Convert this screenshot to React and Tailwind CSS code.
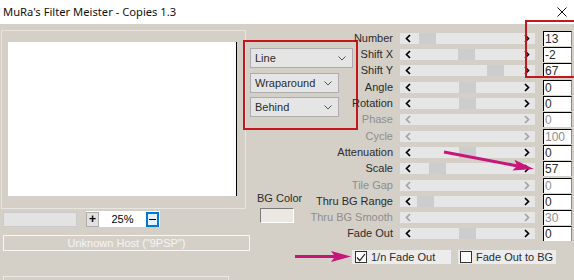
import React from 'react';

const rows = [
  { label: 'Number', value: '13', thumb: 19, h: 'h-[16px]' },
  { label: 'Shift X', value: '-2', thumb: 58, h: 'h-[16px]' },
  { label: 'Shift Y', value: '67', thumb: 87, h: 'h-[17px]' },
  { label: 'Angle', value: '0', thumb: 59, h: 'h-[16px]' },
  { label: 'Rotation', value: '0', thumb: 59, h: 'h-[16px]' },
  { label: 'Phase', value: '0', disabled: true, h: 'h-[17px]' },
  { label: 'Cycle', value: '100', disabled: true, h: 'h-[16px]' },
  { label: 'Attenuation', value: '0', thumb: 59, h: 'h-[16px]' },
  { label: 'Scale', value: '57', thumb: 29, h: 'h-[17px]' },
  { label: 'Tile Gap', value: '0', disabled: true, h: 'h-[16px]' },
  { label: 'Thru BG Range', value: '0', thumb: 17, h: 'h-[16px]' },
  { label: 'Thru BG Smooth', value: '30', disabled: true, h: 'h-[16px]' },
  { label: 'Fade Out', value: '0', thumb: 59, h: 'h-[16px]' },
];

function Arrow({ dir, disabled }) {
  const pts = dir === 'left' ? '5,1 1.5,4.5 5,8' : '1,1 4.5,4.5 1,8';
  return (
    <svg width="6" height="9" viewBox="0 0 6 9" className="shrink-0">
      <polyline points={pts} fill="none" stroke={disabled ? '#a3a3a3' : '#000'} strokeWidth="1.7" />
    </svg>
  );
}

function Dropdown({ text, w }) {
  return (
    <div className={`${w} h-[20px] flex items-center justify-between pl-[4px] pr-[6px] bg-[#e5e5e5] border border-[#adadad] text-[11px] leading-[14px]`}>
      <span>{text}</span>
      <svg width="8" height="5" viewBox="0 0 8 5"><polyline points="0.5,0.5 4,4 7.5,0.5" fill="none" stroke="#555" strokeWidth="1" /></svg>
    </div>
  );
}

export default function App() {
  return (
    <div className="relative w-[574px] h-[280px] overflow-hidden bg-[#d4d0c8] font-['Liberation_Sans',Arial,sans-serif] text-[11px] leading-[13px] text-[#2b2b2b]">
      {/* Title bar */}
      <div className="h-[24px] bg-white flex items-center justify-between pl-[3px] pr-[7px]">
        <span className="font-['Noto_Sans',sans-serif] text-[11.2px] leading-[16px] text-[#111]">MuRa's Filter Meister - Copies 1.3</span>
        <svg width="10" height="10" viewBox="0 0 10 10"><path d="M0.5 0.5 L9.5 9.5 M9.5 0.5 L0.5 9.5" stroke="#111" strokeWidth="1" /></svg>
      </div>

      <div className="flex">
        {/* Preview side */}
        <div className="w-[243px] shrink-0 pl-[1px] pt-[6px]">
          <div className="w-[245px] h-[179px] border border-[#e8e5e0]">
            <div className="ml-[6px] mt-[11px] w-[229px] h-[154px] bg-white border-r border-black" />
          </div>
          <div className="mt-[2px] flex items-center">
            <div className="ml-[2px] w-[74px] h-[15px] bg-[#e3e3e3] border border-[#cbcbcb]" />
            <div className="ml-[9px] w-[74px] h-[16px] bg-white flex items-center">
              <div className="w-[13px] h-[15px] bg-[#e1e1e1] border border-[#adadad] flex items-center justify-center text-[12px] font-bold leading-[13px] text-black">+</div>
              <span className="w-[47px] text-center text-[11px] leading-[14px] text-black">25%</span>
              <div className="w-[13px] h-[15px] bg-[#e5f1fb] border-2 border-[#0078d7] flex items-center justify-center">
                <div className="w-[7px] h-[1px] bg-black" />
              </div>
            </div>
          </div>
          <div className="mt-[8px] ml-[2px] w-[247px] h-[16px] border border-[#f7f7f7] text-[#f4f4f4] text-center leading-[14px]">Unknown Host ("9PSP")</div>
          <div className="mt-[25px] ml-[2px] w-[226px] h-[8px] border-t border-x border-[#e9e7e2]" />
        </div>

        <div className="flex flex-col">
          <div className="flex">
            {/* Drop-downs and BG colour */}
            <div className="w-[115px] shrink-0 pt-[16px]">
              <div className="w-[115px] h-[90px] border-2 border-[#c4161c] pl-[5px] pt-[6px] flex flex-col">
                <Dropdown text="Line" w="w-[103px]" />
                <div className="mt-[5px]"><Dropdown text="Wraparound" w="w-[89px]" /></div>
                <div className="mt-[4px]"><Dropdown text="Behind" w="w-[89px]" /></div>
              </div>
              <div className="mt-[62px] pl-[14px]">BG Color</div>
              <div className="mt-[3px] ml-[17px] w-[34px] h-[15px] bg-[#ebe8e3] border border-t-[#7a7a7a] border-l-[#7a7a7a] border-r-white border-b-white" />
            </div>

            {/* Sliders */}
            <div className="pt-[6px] flex flex-col">
              {rows.map(r => (
                <div key={r.label} className={`${r.h} flex items-center`}>
                  <div className={`w-[35px] h-[13px] flex justify-end whitespace-nowrap ${r.disabled ? 'text-[#8e8e8e]' : ''}`}>{r.label}</div>
                  <div className="ml-[7px] w-[135px] h-[11px] bg-[#e6e6e6] relative flex items-center justify-between px-[5px]">
                    <Arrow dir="left" disabled={r.disabled} />
                    {!r.disabled && <div className="absolute top-0 w-[17px] h-[11px] bg-[#cdcdcd]" style={{ left: r.thumb }} />}
                    <Arrow dir="right" disabled={r.disabled} />
                  </div>
                  <div className={`ml-[8px] w-[29px] h-[15px] bg-white border-l border-t border-black border-r border-r-[#8a8a8a] pl-[1px] text-[12px] leading-[14px] ${r.disabled ? 'text-[#8e8e8e]' : ''}`}>{r.value}</div>
                </div>
              ))}
            </div>
          </div>

          {/* Check boxes */}
          <div className="mt-[9px] pl-[109px] flex">
            <div className="w-[99px] h-[14px] bg-[#ececec] flex items-center pl-[3px]">
              <div className="w-[12px] h-[12px] bg-white border border-[#333] flex items-center justify-center">
                <svg width="10" height="9" viewBox="0 0 10 9"><polyline points="1,4.5 3.8,7.5 9,1" fill="none" stroke="#222" strokeWidth="1.2" /></svg>
              </div>
              <span className="ml-[4px] leading-[14px]">1/n Fade Out</span>
            </div>
            <div className="ml-[7px] w-[98px] h-[14px] bg-[#ececec] flex items-center pl-[2px]">
              <div className="w-[12px] h-[12px] bg-white border border-[#333]" />
              <span className="ml-[4px] leading-[14px]">Fade Out to BG</span>
            </div>
          </div>
        </div>
      </div>

      {/* Annotations drawn over the dialog */}
      <div className="absolute left-[525px] top-[20px] w-[54px] h-[58px] border-2 border-[#c4161c]" />
      <svg className="absolute left-0 top-0 pointer-events-none" width="574" height="280" viewBox="0 0 574 280">
        <line x1="295" y1="256.5" x2="336" y2="256.5" stroke="#c8157a" strokeWidth="3" />
        <path d="M351 256.5 L331 251 L335 256.5 L331 262 Z" fill="#c8157a" />
        <line x1="444" y1="152" x2="518" y2="166" stroke="#c8157a" strokeWidth="3" />
        <path d="M534 169 L514.4 159.7 L517.3 165.8 L512.4 170.5 Z" fill="#c8157a" />
      </svg>
    </div>
  );
}
